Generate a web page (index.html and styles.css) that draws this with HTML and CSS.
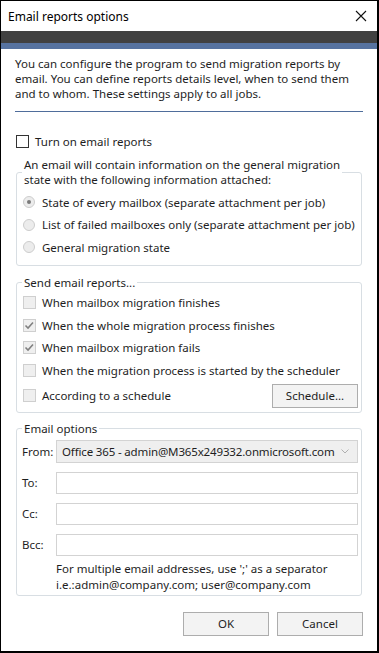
FILE: index.html
```html
<!DOCTYPE html>
<html lang="en">
<head>
    <meta charset="UTF-8">
    <title>Email reports options</title>
    <link rel="stylesheet" href="styles.css">
</head>
<body>
    <div class="window">
        <!-- Title bar -->
        <div class="titlebar">
            <span class="title">Email reports options</span>
            <svg class="close" width="12" height="12" viewBox="0 0 12 12">
                <path d="M1 1 L11 11 M11 1 L1 11" stroke="#111" stroke-width="1.1" fill="none"/>
            </svg>
        </div>
        <div class="bar-dark"></div>
        <div class="bar-blue"></div>

        <div class="content">
            <p class="intro">You can configure the program to send migration reports by<br>email. You can define reports details level, when to send them<br>and to whom. These settings apply to all jobs.</p>
            <div class="separator"></div>

            <div class="row main-check">
                <span class="check enabled"></span>
                <span>Turn on email reports</span>
            </div>

            <!-- Attachment type -->
            <fieldset class="group attach-group">
                <legend>An email will contain information on the general migration<br>state with the following information attached:</legend>
                <div class="row">
                    <span class="radio selected"></span>
                    <span>State of every mailbox (separate attachment per job)</span>
                </div>
                <div class="row">
                    <span class="radio"></span>
                    <span>List of failed mailboxes only (separate attachment per job)</span>
                </div>
                <div class="row">
                    <span class="radio"></span>
                    <span>General migration state</span>
                </div>
            </fieldset>

            <!-- When to send -->
            <fieldset class="group send-group">
                <legend>Send email reports...</legend>
                <div class="row">
                    <span class="check"></span>
                    <span>When mailbox migration finishes</span>
                </div>
                <div class="row">
                    <span class="check"><svg width="13" height="13" viewBox="0 0 13 13"><path d="M2.5 6.5 L5 9 L10 3.5" stroke="#808080" stroke-width="1.6" fill="none"/></svg></span>
                    <span>When the whole migration process finishes</span>
                </div>
                <div class="row">
                    <span class="check"><svg width="13" height="13" viewBox="0 0 13 13"><path d="M2.5 6.5 L5 9 L10 3.5" stroke="#808080" stroke-width="1.6" fill="none"/></svg></span>
                    <span>When mailbox migration fails</span>
                </div>
                <div class="row">
                    <span class="check"></span>
                    <span>When the migration process is started by the scheduler</span>
                </div>
                <div class="row schedule-row">
                    <span class="check"></span>
                    <span>According to a schedule</span>
                    <button class="btn schedule-btn">Schedule...</button>
                </div>
            </fieldset>

            <!-- Addresses -->
            <fieldset class="group email-group">
                <legend>Email options</legend>
                <div class="field">
                    <label>From:</label>
                    <div class="select">
                        <span>Office 365 - admin@M365x249332.onmicrosoft.com</span>
                        <svg width="8" height="5" viewBox="0 0 8 5"><path d="M0.5 0.5 L4 4 L7.5 0.5" stroke="#b0b0b0" stroke-width="1" fill="none"/></svg>
                    </div>
                </div>
                <div class="field">
                    <label>To:</label>
                    <div class="input"></div>
                </div>
                <div class="field">
                    <label>Cc:</label>
                    <div class="input"></div>
                </div>
                <div class="field">
                    <label>Bcc:</label>
                    <div class="input"></div>
                </div>
                <p class="hint">For multiple email addresses, use ';' as a separator<br>i.e.:admin@company.com; user@company.com</p>
            </fieldset>

            <div class="buttons">
                <button class="btn">OK</button>
                <button class="btn">Cancel</button>
            </div>
        </div>
    </div>
</body>
</html>
```

FILE: styles.css
```css
* { margin: 0; padding: 0; box-sizing: border-box; }
body { font-family: "Noto Sans", "Open Sans", sans-serif; font-size: 11.5px; line-height: 15px; color: #1e1e1e; background: #fff; }

.window { width: 379px; height: 653px; border: 1px solid #000; border-right-width: 2px; border-bottom-width: 2px; background: #fff; }

/* Title bar */
.titlebar { height: 30px; display: flex; align-items: center; justify-content: space-between; padding: 0 10px 0 7px; }
.title { font-size: 12px; color: #000; }
.bar-dark { height: 12px; background: #414141; }
.bar-blue { height: 6px; background: #5773a0; }

/* Content */
.content { padding: 7px 14px 0 14px; }
.separator { height: 1px; background: #4f6d9b; margin: 10px 0 0 0; }

.row { display: flex; align-items: center; height: 22.5px; gap: 6px; white-space: nowrap; }
.main-check { height: 22px; margin: 18px 0 5px 1px; }

/* Checkboxes and radios */
.check { width: 13px; height: 13px; border: 1px solid #cfcfcf; background: #efefef; flex: none; display: flex; }
.check svg { margin: -1px; }
.check.enabled { border-color: #333; background: #fff; }
.radio { width: 12px; height: 12px; border-radius: 50%; border: 1px solid #cdcdcd; background: #ececec; flex: none; margin-right: 1px; display: flex; align-items: center; justify-content: center; }
.radio.selected::after { content: ""; width: 4px; height: 4px; border-radius: 50%; background: #7a7a7a; }

/* Groups */
.group { border: 1px solid #d8dee3; border-radius: 3px; padding: 0 3px 6px 5px; margin: 0 0 0 1px; width: 346px; }
.group legend { padding: 0 2px; line-height: 15px; }
.group .row { padding-left: 1px; }
.attach-group { padding-top: 4px; }
.send-group { margin-top: 9px; padding-top: 2px; padding-bottom: 4px; }
.schedule-row { height: 24px; margin-top: 2px; }
.schedule-btn { margin-left: auto; width: 86px; }

.email-group { margin-top: 8px; padding-top: 4px; padding-bottom: 2px; }
.field { display: flex; align-items: center; margin-bottom: 9px; }
.field label { width: 34px; flex: none; }
.select { flex: 1; height: 23px; background: #efefef; border: 1px solid #d3d3d3; display: flex; align-items: center; justify-content: space-between; padding: 0 8px 0 5px; white-space: nowrap; }
.select span { letter-spacing: -0.15px; }
.input { flex: 1; height: 22px; border: 1px solid #d3d3d3; background: #fff; }
.hint { margin: -4px 0 0 34px; line-height: 16px; }

/* Buttons */
.btn { font-family: inherit; font-size: 11.5px; color: #1e1e1e; height: 24px; background: #f3f3f3; border: 1px solid #adadad; }
.buttons { display: flex; justify-content: flex-end; gap: 8px; margin-top: 16px; }
.buttons .btn { width: 86px; }
```
